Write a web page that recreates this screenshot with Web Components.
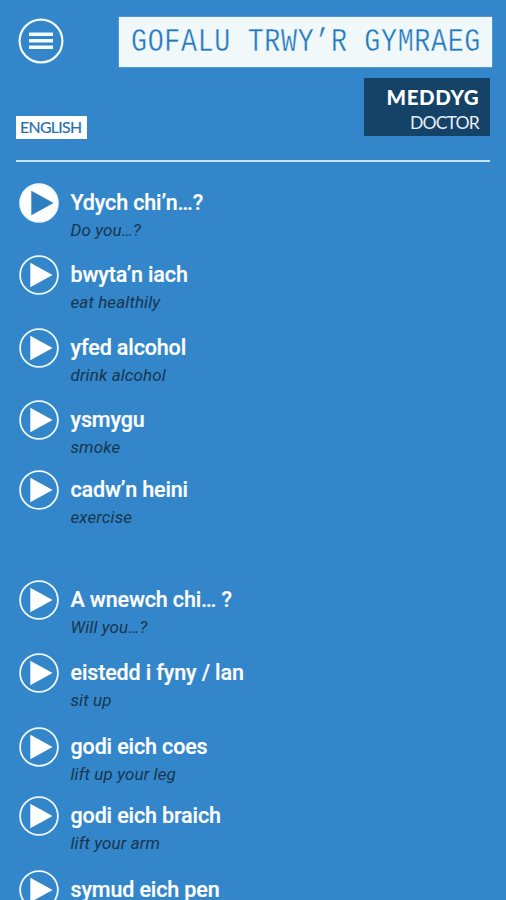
<!DOCTYPE html>
<html lang="cy"><head><meta charset="utf-8"><title>Gofalu Trwy'r Gymraeg</title>
<style>html,body{margin:0;height:900px;overflow:hidden;background:#3386c9}</style></head><body>
<care-app></care-app>
<script>
const attach=(el,html)=>{el.attachShadow({mode:'open'}).innerHTML=html};
customElements.define('menu-button',class extends HTMLElement{constructor(){super();attach(this,`
<style>:host{display:block;width:46px;height:46px}svg{display:block}</style>
<svg width="46" height="46" viewBox="0 0 46 46"><circle cx="23" cy="23" r="21.4" fill="none" stroke="#f4fbff" stroke-width="2.2"/><path d="M11 16.3h24M11 22.8h24M11 29.3h24" stroke="#f4fbff" stroke-width="3.6"/></svg>`)}});
customElements.define('app-banner',class extends HTMLElement{constructor(){super();attach(this,`
<style>:host{display:block;box-sizing:border-box;width:373px;height:50px;background:#f1f8f9;color:#2379be;padding-left:12px;overflow:hidden;box-shadow:0 0 1px #d8edf8}
span{display:block;width:max-content;white-space:pre;font:32.5px/51px "Liberation Mono",monospace;transform:scaleX(.82);transform-origin:0 0;letter-spacing:.82px;-webkit-text-stroke:.4px #f1f8f9}</style><span><slot></slot></span>`)}});
customElements.define('role-badge',class extends HTMLElement{constructor(){super();attach(this,`
<style>:host{display:flex;flex-direction:column;align-items:flex-end;box-sizing:border-box;width:126px;height:58px;background:#154267;color:#fff;padding:7px 11px 0 0;font-family:Lato,sans-serif}
b{font-size:20.5px;font-weight:900;line-height:24px;letter-spacing:.6px;margin-right:-.2px}
i{font-style:normal;font-size:17.6px;line-height:27px;letter-spacing:-.85px;color:#e7eef8}</style><b><slot name="cy"></slot></b><i><slot></slot></i>`)}});
customElements.define('lang-button',class extends HTMLElement{constructor(){super();attach(this,`
<style>:host{display:block;box-sizing:border-box;width:71px;height:23px;background:#fff;color:#246fae;padding-left:4px;font:15.8px/22px Lato,sans-serif;letter-spacing:-.65px;-webkit-text-stroke:.2px #246fae;white-space:nowrap}</style><slot></slot>`)}});
customElements.define('phrase-row',class extends HTMLElement{constructor(){super();attach(this,`
<style>:host{display:grid;grid-template-columns:40px auto;column-gap:11.5px;grid-template-rows:40px 18px;height:58px;width:max-content;font-family:Roboto,sans-serif}
svg{display:block}.c{fill:none;stroke:#eef9ff;stroke-width:1.8}.t{fill:#fff}
:host([active]) .c{fill:#fff}:host([active]) .t{fill:#2d7fbf;transform:translate(1px,0)}
b{font-weight:500;font-size:21.5px;line-height:40px;color:#fff;white-space:pre;letter-spacing:-.13px;-webkit-text-stroke:.2px #fff}
em{grid-column:2;font-size:17px;line-height:15px;color:#18364f;white-space:pre;letter-spacing:.1px}</style>
<svg width="40" height="40" viewBox="0 0 40 40"><circle class="c" cx="20" cy="20" r="18.9"/><path class="t" d="M11.3 7.7 33.6 20 11.3 32.3Z"/></svg>
<b><slot name="cy"></slot></b><em><slot></slot></em>`)}});
const rows=[["Ydych chi’n…?","Do you…?",14],["bwyta’n iach","eat healthily",15],["yfed alcohol","drink alcohol",14],["ysmygu","smoke",12],["cadw’n heini","exercise",51.5],["A wnewch chi… ?","Will you…?",15],["eistedd i fyny / lan","sit up",16],["godi eich coes","lift up your leg",11.5],["godi eich braich","lift your arm",16],["symud eich pen","",0]];
customElements.define('care-app',class extends HTMLElement{constructor(){super();attach(this,`
<style>:host{display:block;box-sizing:border-box;width:506px;height:900px;overflow:hidden;background:#3386c9}
header{display:flex;justify-content:space-between;align-items:flex-start;padding:17px 14px 0 18px}menu-button{margin-top:1px}
.sub{display:flex;justify-content:space-between;align-items:flex-start;padding:11px 16px 0 16px;height:71px}lang-button{margin-top:38px}
hr{border:0;margin:11px 16px 0;height:1.5px;background:#c4e6f8}
main{display:flex;flex-direction:column;padding:21.5px 0 0 19px}</style>
<header><menu-button></menu-button><app-banner>GOFALU TRWY’R GYMRAEG</app-banner></header>
<div class="sub"><lang-button>ENGLISH</lang-button><role-badge><span slot="cy">MEDDYG</span>DOCTOR</role-badge></div><hr>
<main>${rows.map((r,i)=>`<phrase-row ${i?'':'active'} style="margin-bottom:${r[2]}px"><span slot="cy">${r[0]}</span>${r[1]}</phrase-row>`).join('')}</main>`)}});
</script></body></html>
